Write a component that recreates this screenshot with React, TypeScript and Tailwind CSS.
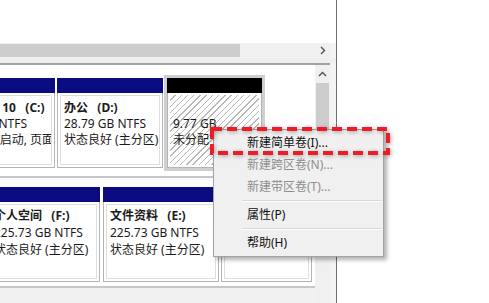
import clsx from 'clsx'

interface PartitionProps {
  name: string
  size: string
  status: string
  className?: string
  body?: string // padding + line height for the text block
}

// One partition box: coloured stripe on top, white body with a double outline
function Partition({ name, size, status, className, body = 'pt-[4px] leading-[16px]' }: PartitionProps) {
  return (
    <div className={clsx('flex shrink-0 flex-col', className)}>
      <div className="h-[15px] shrink-0 bg-[#0b0b82]" />
      <div className="flex-1 border border-t-0 border-[#b4b4b4] bg-white p-[2px]">
        <div
          className={clsx(
            'h-full overflow-hidden whitespace-pre border border-[#dedede] px-[3px] text-[12px] text-[#1b1b1b]',
            body
          )}
        >
          <div className="font-bold">{name}</div>
          <div>{size}</div>
          <div>{status}</div>
        </div>
      </div>
    </div>
  )
}

function Unallocated() {
  return (
    <div className="-my-[3px] ml-[1px] flex w-[101px] shrink-0 flex-col border-[3px] border-[#cfcfcf]">
      <div className="h-[15px] shrink-0 bg-black" />
      <div className="flex-1 border border-t-0 border-[#b4b4b4] bg-white p-[2px]">
        <div className="h-full overflow-hidden whitespace-nowrap bg-[image:repeating-linear-gradient(135deg,#ffffff_0px,#ffffff_3.4px,#b9b9b9_3.4px,#b9b9b9_4.4px)] px-[3px] pt-[5px] text-[12px] leading-[16px] text-[#1b1b1b]">
          <div>&nbsp;</div>
          <div>9.77 GB</div>
          <div>未分配</div>
        </div>
      </div>
    </div>
  )
}

function MenuItem({ label, disabled }: { label: string; disabled?: boolean }) {
  return (
    <div className={clsx('flex h-[22px] items-center pl-[33px] text-[12px]', disabled ? 'text-[#8e8e8e]' : 'text-[#111]')}>
      {label}
    </div>
  )
}

function MenuSeparator() {
  return (
    <div className="ml-[28px] mr-[2px] flex h-[6px] flex-col justify-center">
      <div className="h-px bg-[#d6d6d6]" />
      <div className="h-px bg-white" />
    </div>
  )
}

export default function App() {
  return (
    <div className="relative flex h-[303px] w-[489px] overflow-hidden bg-white font-['Noto_Sans','Noto_Sans_CJK_SC',sans-serif]">
      {/* Disk Management window (cropped) */}
      <div className="flex w-[337px] shrink-0 flex-col border-r border-[#6f6f6f]">
        <div className="h-[43px] shrink-0 bg-white" />

        {/* horizontal scrollbar of the volume list */}
        <div className="flex shrink-0">
          <div className="flex h-[15px] w-[330px] bg-[#f0f0f0]">
            <div className="my-[1px] w-[240px] bg-[#cdcdcd]" />
            <div className="flex-1" />
            <div className="flex w-[15px] items-center justify-center">
              <svg width="6" height="9" viewBox="0 0 6 9">
                <polyline points="1,1 4.5,4.5 1,8" fill="none" stroke="#505050" strokeWidth="1.4" />
              </svg>
            </div>
          </div>
          <div className="flex-1 bg-[#f4f4f4]" />
        </div>
        <div className="h-[5px] shrink-0 bg-[#efefef]" />
        <div className="flex h-[2px] shrink-0">
          <div className="w-[330px] bg-[#a2a2a2]" />
          <div className="flex-1 bg-[#f4f4f4]" />
        </div>

        {/* graphical disk view */}
        <div className="flex flex-1">
          <div className="flex w-[315px] shrink-0 flex-col overflow-hidden bg-white pt-[13px]">
            {/* disk 0 */}
            <div className="border-b-2 border-[#c6c6c6] pb-[8px]">
              <div className="flex h-[90px]">
                <Partition
                  className="ml-[-62px] w-[117px]"
                  name="Windows 10   (C:)"
                  size="59.47 GB NTFS"
                  status="状态良好 (启动, 页面文件, 故障转储, 主分区)"
                />
                <Partition className="ml-[2px] w-[106px]" name="办公   (D:)" size="28.79 GB NTFS" status="状态良好 (主分区)" />
                <Unallocated />
              </div>
            </div>

            {/* disk 1 */}
            <div className="mt-[9px] border-b-2 border-[#c6c6c6] pb-[4px]">
              <div className="flex h-[95px]">
                <Partition
                  className="ml-[-13px] w-[113px]"
                  body="pt-[2px] leading-[17px]"
                  name="个人空间   (F:)"
                  size="225.73 GB NTFS"
                  status="状态良好 (主分区)"
                />
                <Partition
                  className="ml-[3px] w-[116px]"
                  body="pt-[2px] leading-[17px]"
                  name="文件资料   (E:)"
                  size="225.73 GB NTFS"
                  status="状态良好 (主分区)"
                />
                <Partition className="ml-[2px] w-[91px]" body="pt-[2px] leading-[17px]" name="" size="" status="" />
              </div>
            </div>
            <div className="flex-1 bg-[#f1f1f1]" />
          </div>

          {/* vertical scrollbar */}
          <div className="flex w-[15px] shrink-0 flex-col bg-[#f0f0f0]">
            <div className="flex h-[18px] items-center justify-center">
              <svg width="9" height="6" viewBox="0 0 9 6">
                <polyline points="1,5 4.5,1.5 8,5" fill="none" stroke="#505050" strokeWidth="1.4" />
              </svg>
            </div>
            <div className="mx-[1px] h-[150px] bg-[#cdcdcd]" />
          </div>
          <div className="flex-1 bg-[#f4f4f4]" />
        </div>
      </div>

      <div className="flex-1 bg-white" />

      {/* context menu */}
      <div className="absolute left-[213px] top-[129px] w-[171px] border border-[#a3a3a3] bg-[#f0f0f0] py-[2px] shadow-[3px_3px_4px_rgba(0,0,0,0.3)]">
        <MenuItem label="新建简单卷(I)..." />
        <MenuItem label="新建跨区卷(N)..." disabled />
        <MenuItem label="新建带区卷(T)..." disabled />
        <MenuSeparator />
        <MenuItem label="属性(P)" />
        <MenuSeparator />
        <MenuItem label="帮助(H)" />
      </div>

      {/* red dashed highlight */}
      <svg
        className="absolute left-[210px] top-[127px] drop-shadow-[1px_1px_2px_rgba(0,0,0,0.35)]"
        width="180"
        height="28"
        viewBox="0 0 180 28"
      >
        <rect x="2" y="2" width="176" height="24" fill="none" stroke="#ee1c24" strokeWidth="4" strokeDasharray="10 5" />
      </svg>
    </div>
  )
}
